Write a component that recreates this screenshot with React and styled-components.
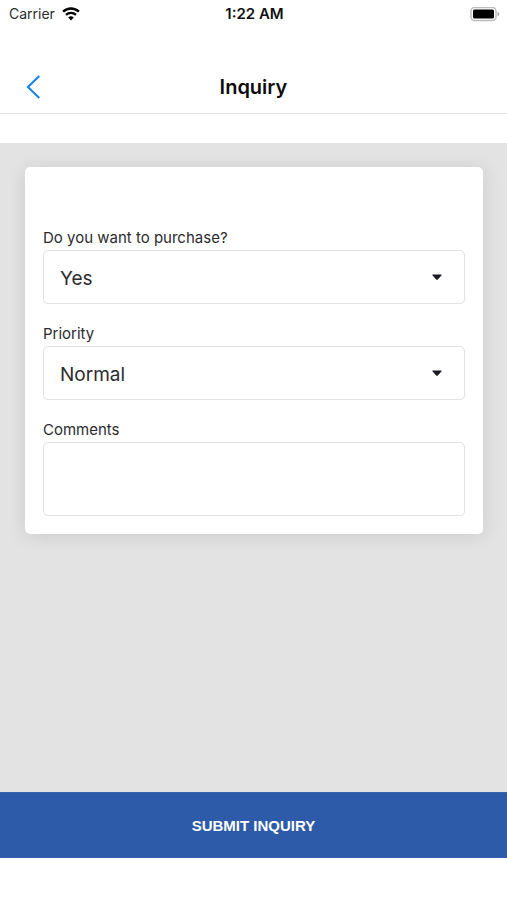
import React, { useState } from "react";
import styled, { createGlobalStyle } from "styled-components";

const GlobalStyle = createGlobalStyle`
  * {
    box-sizing: border-box;
  }
  body {
    margin: 0;
    background: #fff;
    color: #2b2b2e;
    font-family: Inter, "Liberation Sans", sans-serif;
  }
`;

const Screen = styled.div`
  min-height: 100vh;
  display: flex;
  flex-direction: column;
`;

const StatusBar = styled.div`
  height: 28px;
  padding: 0 7px 0 9px;
  display: grid;
  grid-template-columns: 1fr auto 1fr;
  align-items: center;
  font-size: 14px;
  line-height: 28px;
`;

const Carrier = styled.div`
  display: flex;
  align-items: center;
  gap: 7px;
`;

const Clock = styled.div`
  color: #111;
  font-size: 15px;
  font-weight: 600;
`;

const Battery = styled.svg`
  justify-self: end;
`;

const Header = styled.header`
  margin-top: 32px;
  height: 54px;
  padding: 0 20px;
  display: grid;
  grid-template-columns: 1fr auto 1fr;
  align-items: center;
  border-bottom: 1px solid #dfdfdf;
  h1 {
    margin: 0;
    color: #0c0c0d;
    font-size: 20px;
    font-weight: 600;
  }
`;

const BackButton = styled.button`
  justify-self: start;
  display: flex;
  padding: 0 6px;
  border: none;
  background: none;
`;

const Content = styled.main`
  flex: 1;
  margin-top: 29px;
  padding: 24px 24px 24px 25px;
  background: #e3e3e3;
`;

const Card = styled.form`
  display: flex;
  flex-direction: column;
  gap: 20px;
  padding: 61px 18px 18px;
  border-radius: 5px;
  background: #fff;
  box-shadow: 0 2px 20px rgba(0, 0, 0, 0.11);
`;

const Field = styled.div`
  display: flex;
  flex-direction: column;
  gap: 2px;
  label {
    font-size: 15px;
    line-height: 20px;
  }
`;

const SelectBox = styled.div`
  display: grid;
  align-items: center;
  select {
    grid-area: 1 / 1;
    appearance: none;
    width: 100%;
    height: 54px;
    padding: 2px 48px 0 16px;
    border: 1px solid #e1e1e1;
    border-radius: 5px;
    background: #fff;
    color: #2b2b2e;
    font-family: inherit;
    font-size: 19px;
  }
  svg {
    grid-area: 1 / 1;
    justify-self: end;
    margin-right: 23px;
    pointer-events: none;
  }
`;

const TextArea = styled.textarea`
  display: block;
  width: 100%;
  height: 74px;
  padding: 12px 16px;
  border: 1px solid #e1e1e1;
  border-radius: 5px;
  background: #fff;
  font-family: inherit;
  font-size: 19px;
  resize: none;
`;

const SubmitButton = styled.button`
  height: 66px;
  margin-bottom: 42px;
  border: 1px solid #3a63ad;
  border-width: 1px 0;
  background: #2d5aa9;
  color: #fff;
  font-family: "Liberation Sans", sans-serif;
  font-size: 15px;
  font-weight: bold;
`;

const Dropdown = ({ id, label, options, value, onChange }) => (
  <Field>
    <label htmlFor={id}>{label}</label>
    <SelectBox>
      <select id={id} value={value} onChange={(e) => onChange(e.target.value)}>
        {options.map((option) => (
          <option key={option}>{option}</option>
        ))}
      </select>
      <svg width="10" height="6" viewBox="0 0 10 6" aria-hidden="true">
        <path d="M1 0.5h8c.6 0 .8.6.4 1L5.8 5.4c-.5.4-1.1.4-1.6 0L.6 1.5C.2 1.1.4.5 1 .5z" fill="#1c1c20" />
      </svg>
    </SelectBox>
  </Field>
);

const App = () => {
  const [purchase, setPurchase] = useState("Yes");
  const [priority, setPriority] = useState("Normal");
  const [comments, setComments] = useState("");

  return (
    <Screen>
      <GlobalStyle />
      <StatusBar>
        <Carrier>
          Carrier
          <svg width="18" height="14" viewBox="0 0 18 14" aria-label="Wi-Fi">
            <path d="M1.1 4.6a11.3 11.3 0 0 1 15.8 0" fill="none" stroke="#000" strokeWidth="2.5" />
            <path d="M4 7.8a7.2 7.2 0 0 1 10 0" fill="none" stroke="#000" strokeWidth="2.3" />
            <path d="M9 13.4 6.2 10.5a4 4 0 0 1 5.6 0z" fill="#000" />
          </svg>
        </Carrier>
        <Clock>1:22 AM</Clock>
        <Battery width="30" height="15" viewBox="0 0 30 15" aria-label="Battery full">
          <rect x="1" y="0.5" width="25" height="13" rx="3.5" fill="#fff" stroke="#bdbdbd" strokeWidth="1.5" />
          <rect x="3" y="2.5" width="21" height="9" rx="1.5" fill="#000" />
          <path d="M27.5 4.8c2.4.9 2.4 3.5 0 4.4z" fill="#a6a6a6" />
        </Battery>
      </StatusBar>
      <Header>
        <BackButton type="button" aria-label="Back">
          <svg width="15" height="24" viewBox="0 0 15 24">
            <path d="M13.3 1 1.9 12 13.3 23" fill="none" stroke="#1680ee" strokeWidth="2" />
          </svg>
        </BackButton>
        <h1>Inquiry</h1>
      </Header>
      <Content>
        <Card id="inquiry" onSubmit={(e) => e.preventDefault()}>
          <Dropdown
            id="purchase"
            label="Do you want to purchase?"
            options={["Yes", "No"]}
            value={purchase}
            onChange={setPurchase}
          />
          <Dropdown
            id="priority"
            label="Priority"
            options={["Low", "Normal", "High"]}
            value={priority}
            onChange={setPriority}
          />
          <Field>
            <label htmlFor="comments">Comments</label>
            <TextArea id="comments" value={comments} onChange={(e) => setComments(e.target.value)} />
          </Field>
        </Card>
      </Content>
      <SubmitButton type="submit" form="inquiry">
        SUBMIT INQUIRY
      </SubmitButton>
    </Screen>
  );
};

export default App;
